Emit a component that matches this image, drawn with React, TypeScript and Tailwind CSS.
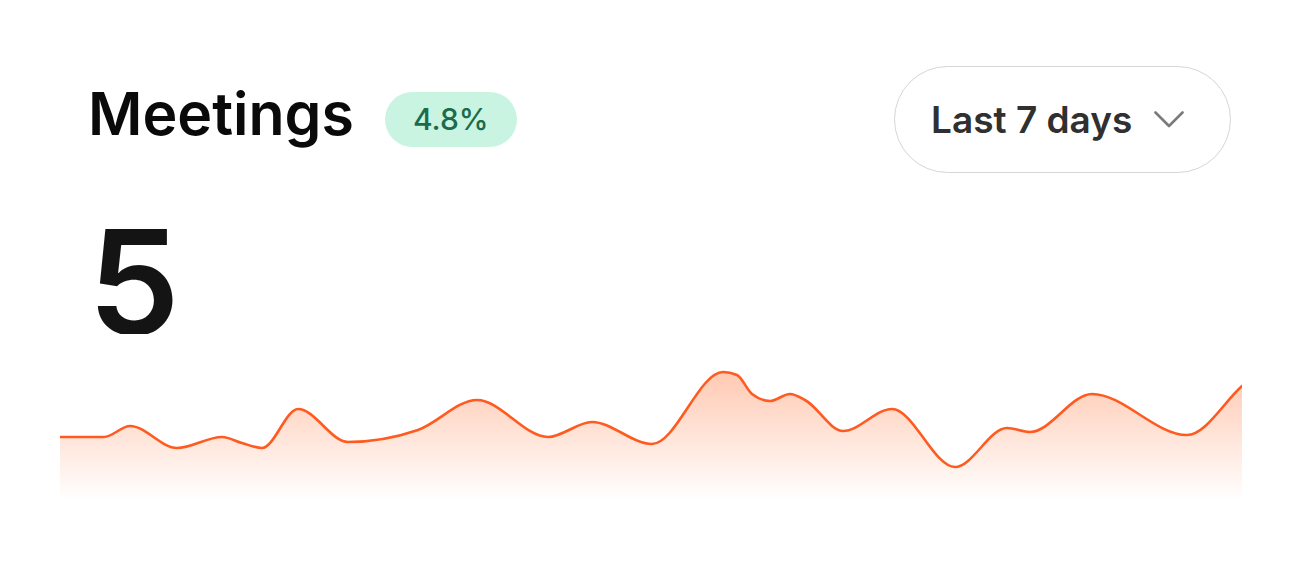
import { useMemo } from 'react'

type Pt = [number, number]

// page coords read off the design; shifted into the svg box below
const points: Pt[] = [
    [60, 437], [104, 437], [130, 426], [177, 448], [222, 437], [242, 443], [262, 448],
    [298, 409], [348, 442], [418, 430], [477, 400], [548, 437], [592, 422], [652, 444],
    [723, 372], [737, 375], [752, 394], [770, 401], [790, 394], [805, 400], [843, 431],
    [892, 409], [955, 467], [1007, 428], [1030, 432], [1092, 394], [1187, 435], [1242, 386],
]

const OX = 60
const OY = 336
const W = 1182
const H = 170
const BASE = 164

function monotonePath(pts: Pt[]) {
    const n = pts.length
    const dx: number[] = []
    const m: number[] = []
    for (let i = 0; i < n - 1; i++) {
        dx.push(pts[i + 1][0] - pts[i][0])
        m.push((pts[i + 1][1] - pts[i][1]) / dx[i])
    }
    const t: number[] = new Array(n).fill(0)
    t[0] = m[0]
    t[n - 1] = m[n - 2]
    for (let i = 1; i < n - 1; i++) {
        if (m[i - 1] * m[i] <= 0) {
            t[i] = 0
        } else {
            const p = (m[i - 1] * dx[i] + m[i] * dx[i - 1]) / (dx[i - 1] + dx[i])
            t[i] = (Math.sign(m[i - 1]) + Math.sign(m[i])) * Math.min(Math.abs(m[i - 1]), Math.abs(m[i]), 0.5 * Math.abs(p))
        }
    }
    let d = `M${pts[0][0]},${pts[0][1]}`
    for (let i = 0; i < n - 1; i++) {
        const [x0, y0] = pts[i]
        const [x1, y1] = pts[i + 1]
        const h = dx[i] / 3
        d += ` C${x0 + h},${y0 + t[i] * h} ${x1 - h},${y1 - t[i + 1] * h} ${x1},${y1}`
    }
    return d
}

function Sparkline() {
    const { line, area } = useMemo(() => {
        const local = points.map(([x, y]) => [x - OX, y - OY] as Pt)
        const line = monotonePath(local)
        const last = local[local.length - 1]
        const area = `${line} L${last[0]},${BASE} L${local[0][0]},${BASE} Z`
        return { line, area }
    }, [])

    return (
        <svg width={W} height={H} viewBox={`0 0 ${W} ${H}`} className="block ml-[60px]">
            <defs>
                <linearGradient id="meetFill" x1="0" y1="0" x2="0" y2="1">
                    <stop offset="0%" stopColor="#ff6a2b" stopOpacity={0.36} />
                    <stop offset="100%" stopColor="#ff6a2b" stopOpacity={0} />
                </linearGradient>
            </defs>
            <path d={area} fill="url(#meetFill)" />
            <path d={line} fill="none" stroke="#ff5a1f" strokeWidth={2.6} strokeLinejoin="round" strokeLinecap="round" />
        </svg>
    )
}

export default function App() {
    return (
        <div className="min-h-screen bg-white font-['Inter',sans-serif]">
            <div className="pt-[66px]">
                {/* Header */}
                <div className="flex items-center justify-between pl-[88px] pr-[71px]">
                    <div className="flex items-center gap-[31px]">
                        <h1 className="text-[59px] font-semibold leading-none pb-3 text-[#0a0a0a]">Meetings</h1>
                        <span className="h-[55px] px-[28px] rounded-full bg-[#c9f4e2] text-[#1d6b4b] text-[30px] font-medium flex items-center">
                            4.8%
                        </span>
                    </div>
                    <button className="w-[337px] h-[107px] rounded-full border-[1.5px] border-[#d6d6d6] flex items-center pl-[36px] gap-[22px]">
                        <span className="text-[37px] font-semibold text-[#303030] leading-none">Last 7 days</span>
                        <svg width="30" height="17" viewBox="0 0 30 17" fill="none">
                            <polyline points="1.5,1.5 15,15 28.5,1.5" stroke="#7a7a7a" strokeWidth={2.6} strokeLinecap="round" strokeLinejoin="round" />
                        </svg>
                    </button>
                </div>

                {/* Big value, clipped at the bottom */}
                <div className="mt-[36px] pl-[88px] h-[125px] overflow-hidden text-[146px] font-semibold leading-none text-[#141414]">
                    5
                </div>

                <div className="mt-[2px]">
                    <Sparkline />
                </div>
            </div>
        </div>
    )
}
